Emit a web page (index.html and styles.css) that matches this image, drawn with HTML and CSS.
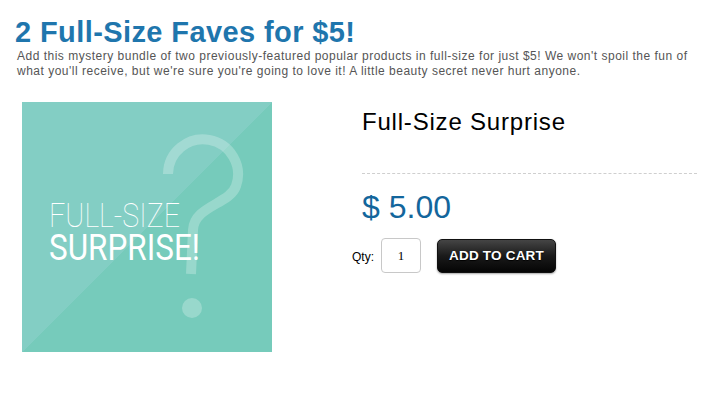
FILE: index.html
```html
<!DOCTYPE html>
<html>
<head>
<meta charset="utf-8">
<link rel="stylesheet" href="styles.css">
</head>
<body>
<div class="page">
  <header class="intro">
    <h1 class="title">2 Full-Size Faves for $5!</h1>
    <p class="desc">Add this mystery bundle of two previously-featured popular products in full-size for just $5! We won't spoil the fun of what you'll receive, but we're sure you're going to love it! A little beauty secret never hurt anyone.</p>
  </header>
  <main class="product">
    <div class="media">
      <div class="art">
        <svg class="art-bg" width="250" height="250" viewBox="0 0 250 250" aria-hidden="true">
          <path d="M146 72 A35 35 0 1 1 214 84 C208 102 172 104 171 128 L169 172" fill="none" stroke="#ffffff" stroke-opacity="0.25" stroke-width="10"/>
          <circle cx="170" cy="206" r="10" fill="#ffffff" fill-opacity="0.25"/>
        </svg>
        <div class="art-text">
          <span class="art-line1">FULL-SIZE</span>
          <span class="art-line2">SURPRISE!</span>
        </div>
      </div>
    </div>
    <div class="info">
      <h2 class="name">Full-Size Surprise</h2>
      <div class="divider"></div>
      <div class="price">$ 5.00</div>
      <div class="buy">
        <label class="qty-label" for="qty">Qty:</label>
        <input class="qty" id="qty" type="text" value="1">
        <button class="cart" type="button">ADD TO CART</button>
      </div>
    </div>
  </main>
</div>
</body>
</html>
```
FILE: styles.css
```css
html, body {
  margin: 0;
  padding: 0;
  background: #ffffff;
}
body {
  font-family: "Liberation Sans", Arial, sans-serif;
}
.page {
  width: 717px;
}
.intro {
  padding: 16px 0 0 15px;
}
.title {
  margin: 0;
  font-size: 29px;
  line-height: 32px;
  font-weight: bold;
  letter-spacing: 0.4px;
  color: #1f76ad;
}
.desc {
  margin: 1px 0 0 2px;
  font-size: 12px;
  line-height: 15px;
  letter-spacing: 0.5px;
  color: #555555;
  width: 685px;
}
.product {
  display: flex;
  margin-top: 23px;
  padding-left: 22px;
}
.media {
  width: 330px;
  flex: none;
}
.art {
  position: relative;
  width: 250px;
  height: 250px;
  background: linear-gradient(to bottom right, #83cec4 50%, #76cbbb 50%);
  overflow: hidden;
}
.art-bg {
  position: absolute;
  left: 0;
  top: 0;
}
.art-text {
  position: relative;
  display: flex;
  flex-direction: column;
  align-items: flex-start;
  padding: 97px 0 0 27px;
  color: #ffffff;
  font-family: Roboto, "Open Sans", sans-serif;
}
.art-line1 {
  display: inline-block;
  font-size: 34px;
  line-height: 32px;
  font-weight: 100;
  transform: scaleX(0.84);
  transform-origin: left center;
}
.art-line2 {
  display: inline-block;
  font-size: 37px;
  line-height: 34px;
  font-weight: 400;
  transform: scaleX(0.85);
  transform-origin: left center;
}
.info {
  flex: 1;
  padding-right: 20px;
}
.name {
  margin: 6px 0 0 10px;
  font-size: 24px;
  line-height: 28px;
  font-weight: normal;
  letter-spacing: 0.8px;
  color: #000000;
}
.divider {
  margin: 37px 0 0 10px;
  height: 0;
  border-top: 1px dashed #cfcfcf;
}
.price {
  margin: 15px 0 0 10px;
  font-size: 32px;
  line-height: 36px;
  color: #13669c;
}
.buy {
  display: flex;
  align-items: center;
  margin-top: 13px;
}
.qty-label {
  font-size: 12px;
  color: #000000;
  margin-right: 7px;
  padding-top: 2px;
}
.qty {
  box-sizing: border-box;
  width: 40px;
  height: 35px;
  border: 1px solid #c8c8c8;
  border-radius: 4px;
  text-align: center;
  font-family: "Liberation Serif", serif;
  font-size: 13px;
  color: #000000;
  padding: 0;
  margin: 0;
}
.cart {
  margin-left: 16px;
  width: 119px;
  height: 34px;
  border: 1px solid #111111;
  border-radius: 5px;
  background: linear-gradient(to bottom, #454545 0%, #1a1a1a 50%, #050505 100%);
  box-shadow: 0 1px 2px rgba(0, 0, 0, 0.35);
  color: #ffffff;
  font-family: "Liberation Sans", Arial, sans-serif;
  font-weight: bold;
  font-size: 13.5px;
  letter-spacing: 0.2px;
  text-shadow: 0 1px 1px #000000;
  padding: 0;
}
```
